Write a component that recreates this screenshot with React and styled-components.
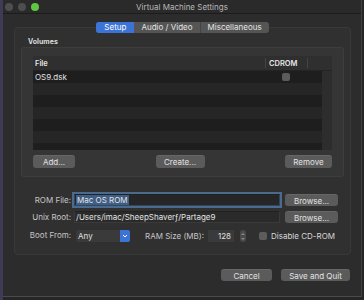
import React from "react";
import styled, { createGlobalStyle } from "styled-components";

const GlobalStyle = createGlobalStyle`
  body {
    margin: 0;
    background: #262626;
    font-family: Inter, "Liberation Sans", sans-serif;
    -webkit-font-smoothing: antialiased;
  }
`;

const Screen = styled.div`
  display: flex;
  width: 364px;
  height: 300px;
  overflow: hidden;
`;

const Desktop = styled.div`
  width: 3px;
  background: #3f3a55;
`;

const Window = styled.div`
  width: 358px;
  height: 296px;
  background: #2c2c2c;
  border-right: 1px solid #3f3f3f;
  border-bottom: 1px solid #4a4a4a;
  display: flex;
  flex-direction: column;
`;

const TitleBar = styled.div`
  height: 13px;
  display: grid;
  grid-template-columns: 1fr auto 1fr;
  align-items: center;
  border-bottom: 1px solid #1c1c1c;
  background: #2a2a2a;
`;

const Lights = styled.div`
  display: flex;
  gap: 5px;
  padding-left: 2px;
  margin-top: 1px;
`;

const Light = styled.span`
  width: 8px;
  height: 8px;
  border-radius: 50%;
  background: ${(p) => p.$color};
`;

const Title = styled.div`
  font-size: 8px;
  color: #b8b8b8;
  margin-top: 1px;
`;

const Tabs = styled.div`
  align-self: center;
  margin-top: 8px;
  display: flex;
  height: 11px;
  border-radius: 3px;
  background: #555;
  position: relative;
  z-index: 1;
  overflow: hidden;
  margin-left: 1px;
`;

const Tab = styled.div`
  font-size: 8px;
  line-height: 11px;
  padding: 0 ${(p) => p.$pad}px;
  color: ${(p) => (p.$active ? "#fff" : "#e4e4e4")};
  background: ${(p) => (p.$active ? "#3b73d6" : "transparent")};
  border-left: ${(p) => (p.$sep ? "1px solid #444" : "none")};
`;

const Group = styled.div`
  margin: -6px 10px 0 11px;
  height: 226px;
  background: #303030;
  border: 1px solid #393939;
  border-radius: 4px;
  padding: 0 6px;
  display: flex;
  flex-direction: column;
`;

const GroupLabel = styled.div`
  font-size: 7px;
  font-weight: 700;
  color: #dcdcdc;
  margin: 9px 0 0 7px;
  line-height: 9px;
`;

const VolumesBox = styled.div`
  margin-top: 1px;
  height: 114px;
  background: #353535;
  border: 1px solid #3d3d3d;
  border-radius: 3px;
  padding: 8px 11px 6px;
  display: flex;
  flex-direction: column;
`;

const Table = styled.div`
  height: 94px;
  display: flex;
  flex-direction: column;
  background: #2c2c2c;
`;

const HeaderRow = styled.div`
  height: 14px;
  display: grid;
  grid-template-columns: 232px 42px 1fr;
  background: #2f2f2f;
  border-bottom: 1px solid #242424;
  font-size: 7.5px;
  font-weight: 600;
  color: #e6e6e6;
`;

const HeadCell = styled.div`
  display: flex;
  align-items: center;
  padding-left: ${(p) => p.$pad || 2}px;
  border-left: ${(p) => (p.$sep ? "1px solid #444" : "none")};
  margin: ${(p) => (p.$sep ? "2px 0" : "0")};
`;

const TableBody = styled.div`
  flex: 1;
  display: flex;
  overflow: hidden;
`;

const Rows = styled.div`
  flex: 1;
  display: flex;
  flex-direction: column;
`;

const Row = styled.div`
  height: 12px;
  flex-shrink: 0;
  display: grid;
  grid-template-columns: 232px 42px;
  align-items: center;
  background: ${(p) => (p.$odd ? "#1e1e1e" : "#262626")};
  font-size: 8px;
  color: #e2e2e2;
`;

const FileCell = styled.div`
  padding-left: 2px;
`;

const CheckCell = styled.div`
  display: flex;
  justify-content: center;
`;

const Check = styled.span`
  width: 8px;
  height: 8px;
  border-radius: 2px;
  background: #5c5c5c;
  display: inline-block;
  flex-shrink: 0;
`;

const ScrollTrack = styled.div`
  width: 10px;
  background: #2d2d2d;
`;

const ButtonRow = styled.div`
  margin-top: 5px;
  display: flex;
  justify-content: space-between;
`;

const Button = styled.div`
  width: ${(p) => p.$w}px;
  height: 13px;
  display: flex;
  align-items: center;
  justify-content: center;
  background: #5b5b5b;
  border-top: 1px solid #666;
  box-sizing: border-box;
  border-radius: 3px;
  font-size: 8px;
  color: #e2e2e2;
  white-space: nowrap;
`;

const Form = styled.div`
  margin-top: 17px;
  display: grid;
  grid-template-columns: 50px 206px 53px;
  column-gap: 3px;
  row-gap: 5px;
  align-items: center;
`;

const Label = styled.div`
  font-size: 8px;
  color: #c6c6c6;
  text-align: right;
  white-space: nowrap;
`;

const Field = styled.div`
  height: 12px;
  box-sizing: border-box;
  background: ${(p) => (p.$focus ? "#262626" : "#2a2a2a")};
  border: 1px solid ${(p) => (p.$focus ? "#32465c" : "#3a3a3a")};
  border-top-color: #222;
  box-shadow: ${(p) => (p.$focus ? "0 0 0 2px #4a6a8e" : "none")};
  font-size: 8px;
  color: #e2e2e2;
  display: flex;
  align-items: center;
  padding-left: 1px;
  white-space: nowrap;
  overflow: hidden;
`;

const Selected = styled.span`
  background: #3f5e86;
  padding: 0 1px;
  line-height: 10px;
`;

const BrowseButton = styled(Button)`
  margin-left: 2px;
  height: 12px;
`;

const BootRow = styled.div`
  grid-column: 2 / 4;
  display: flex;
  align-items: center;
  margin-top: 2px;
  white-space: nowrap;
`;

const Select = styled.div`
  width: 54px;
  height: 12px;
  margin-left: 2px;
  display: flex;
  border-radius: 2px;
  overflow: hidden;
  background: #3a3a3a;
`;

const SelectText = styled.div`
  flex: 1;
  font-size: 8px;
  color: #e0e0e0;
  padding-left: 2px;
  line-height: 12px;
`;

const SelectArrow = styled.div`
  width: 10px;
  background: #3b73d6;
  display: flex;
  align-items: center;
  justify-content: center;
`;

const InlineLabel = styled(Label)`
  margin-left: ${(p) => p.$ml}px;
`;

const NumberBox = styled.div`
  width: 26px;
  height: 12px;
  margin-left: 4px;
  background: #3a3a3a;
  font-size: 8px;
  color: #e0e0e0;
  text-align: right;
  padding-right: 3px;
  box-sizing: border-box;
  line-height: 12px;
`;

const Stepper = styled.div`
  width: 6px;
  height: 12px;
  margin-left: 6px;
  border-radius: 3px;
  background: #4a4a4a;
  display: flex;
  align-items: center;
  justify-content: center;
`;

const CheckLabel = styled.div`
  display: flex;
  align-items: center;
  gap: 4px;
  margin-left: 13px;
  font-size: 8px;
  color: #d8d8d8;
`;

const Footer = styled.div`
  display: flex;
  justify-content: flex-end;
  gap: 9px;
  padding: 14px 11px 0 0;
`;

const FooterButton = styled(Button)`
  height: 12px;
`;

const Chevron = () => (
  <svg width="6" height="4" viewBox="0 0 6 4">
    <path d="M1 1 L3 3 L5 1" stroke="#fff" strokeWidth="1" fill="none" />
  </svg>
);

const StepIcon = () => (
  <svg width="4" height="9" viewBox="0 0 4 9">
    <path d="M0.7 3 L2 1.6 L3.3 3 M0.7 6 L2 7.4 L3.3 6" stroke="#bbb" strokeWidth="0.8" fill="none" />
  </svg>
);

const rowCount = 7;

export default function App() {
  return (
    <>
      <GlobalStyle />
      <Screen>
        <Desktop />
        <Window>
          <TitleBar>
            <Lights>
              <Light $color="#4e4e4e" />
              <Light $color="#4e4e4e" />
              <Light $color="#5ec640" />
            </Lights>
            <Title>Virtual Machine Settings</Title>
            <div />
          </TitleBar>

          <Tabs>
            <Tab $active $pad={8}>Setup</Tab>
            <Tab $pad={7}>Audio / Video</Tab>
            <Tab $sep $pad={7}>Miscellaneous</Tab>
          </Tabs>

          <Group>
            <GroupLabel>Volumes</GroupLabel>
            <VolumesBox>
              <Table>
                <HeaderRow>
                  <HeadCell>File</HeadCell>
                  <HeadCell $sep $pad={3}>CDROM</HeadCell>
                  <HeadCell $sep />
                </HeaderRow>
                <TableBody>
                  <Rows>
                    {Array.from({ length: rowCount }).map((_, i) => (
                      <Row key={i} $odd={i % 2 === 0}>
                        <FileCell>{i === 0 ? "OS9.dsk" : ""}</FileCell>
                        <CheckCell>{i === 0 && <Check />}</CheckCell>
                      </Row>
                    ))}
                  </Rows>
                  <ScrollTrack />
                </TableBody>
              </Table>
              <ButtonRow>
                <Button $w={42}>Add...</Button>
                <Button $w={49}>Create...</Button>
                <Button $w={47}>Remove</Button>
              </ButtonRow>
            </VolumesBox>

            <Form>
              <Label>ROM File:</Label>
              <Field $focus>
                <Selected>Mac OS ROM</Selected>
              </Field>
              <BrowseButton $w={53}>Browse...</BrowseButton>

              <Label>Unix Root:</Label>
              <Field>/Users/imac/SheepShaverƒ/Partage9</Field>
              <BrowseButton $w={53}>Browse...</BrowseButton>

              <Label>Boot From:</Label>
              <BootRow>
                <Select>
                  <SelectText>Any</SelectText>
                  <SelectArrow>
                    <Chevron />
                  </SelectArrow>
                </Select>
                <InlineLabel $ml={15}>RAM Size (MB):</InlineLabel>
                <NumberBox>128</NumberBox>
                <Stepper>
                  <StepIcon />
                </Stepper>
                <CheckLabel>
                  <Check />
                  Disable CD-ROM
                </CheckLabel>
              </BootRow>
            </Form>
          </Group>

          <Footer>
            <FooterButton $w={51}>Cancel</FooterButton>
            <FooterButton $w={69}>Save and Quit</FooterButton>
          </Footer>
        </Window>
      </Screen>
    </>
  );
}
